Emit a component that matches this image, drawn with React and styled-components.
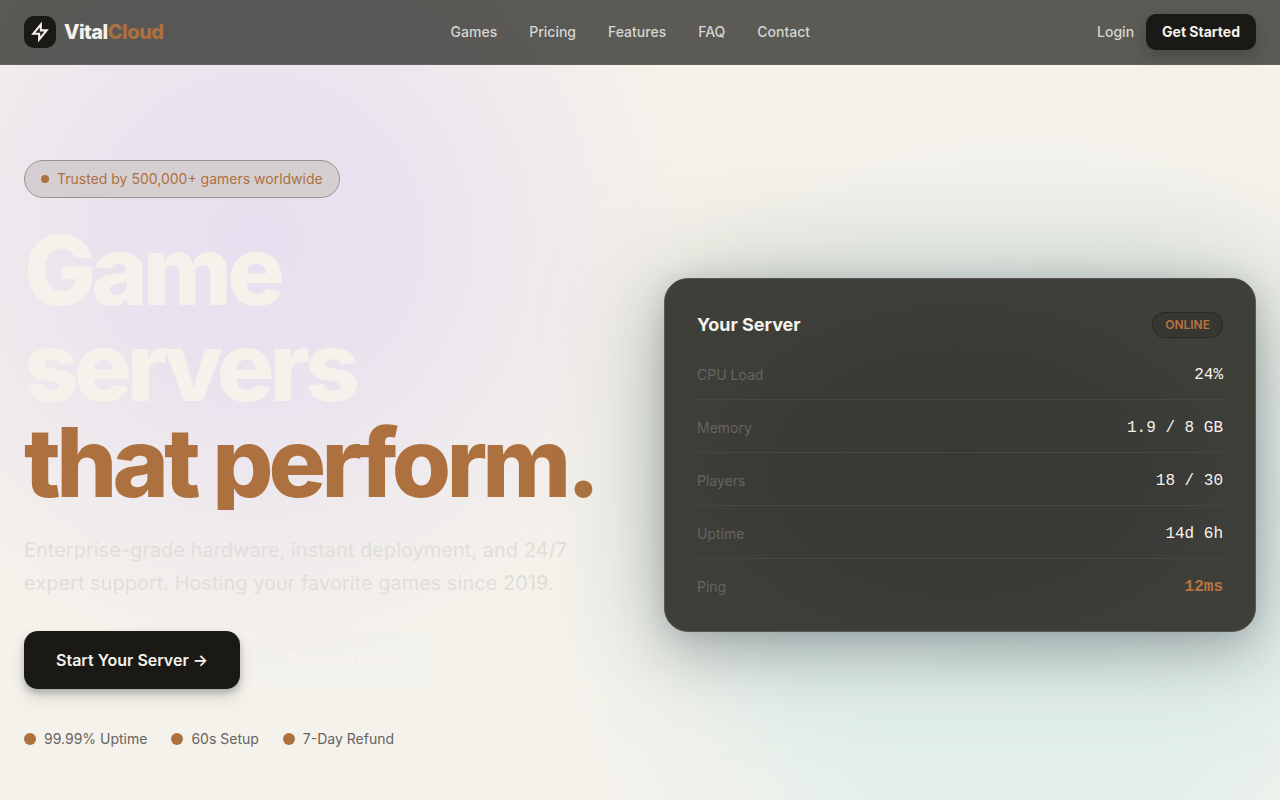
import React from "react";
import styled, { createGlobalStyle } from "styled-components";

const links = ["Games", "Pricing", "Features", "FAQ", "Contact"];

const stats = [
  { label: "CPU Load", value: "24%" },
  { label: "Memory", value: "1.9 / 8 GB" },
  { label: "Players", value: "18 / 30" },
  { label: "Uptime", value: "14d 6h" },
  { label: "Ping", value: "12ms", accent: true },
];

const perks = ["99.99% Uptime", "60s Setup", "7-Day Refund"];

const App = () => {
  return (
    <Page>
      <GlobalStyle />
      <Header>
        <Logo href="#">
          <LogoMark>
            <svg width="20" height="20" viewBox="0 0 24 24" fill="none">
              <path
                d="M13 10V3L4 14h7v7l9-11h-7z"
                stroke="currentColor"
                strokeWidth="2.5"
              />
            </svg>
          </LogoMark>
          <LogoText>
            Vital<Accent>Cloud</Accent>
          </LogoText>
        </Logo>
        <Nav>
          {links.map((item) => (
            <NavLink href="#" key={item}>
              {item}
            </NavLink>
          ))}
        </Nav>
        <Actions>
          <NavLink href="#">Login</NavLink>
          <SmallButton>Get Started</SmallButton>
        </Actions>
      </Header>
      <Hero>
        <Intro>
          <Badge>
            <BadgeDot />
            Trusted by 500,000+ gamers worldwide
          </Badge>
          <Title>
            Game servers
            <TitleAccent>that perform.</TitleAccent>
          </Title>
          <Lead>
            Enterprise-grade hardware, instant deployment, and 24/7 expert
            support. Hosting your favorite games since 2019.
          </Lead>
          <ButtonRow>
            <PrimaryButton>Start Your Server →</PrimaryButton>
            <GhostButton>Browse Games</GhostButton>
          </ButtonRow>
          <Perks>
            {perks.map((item) => (
              <Perk key={item}>
                <PerkDot />
                {item}
              </Perk>
            ))}
          </Perks>
        </Intro>
        <Card>
          <CardHeader>
            <CardTitle>Your Server</CardTitle>
            <Status>ONLINE</Status>
          </CardHeader>
          <Stats>
            <tbody>
              {stats.map((item) => (
                <StatRow key={item.label}>
                  <StatLabel scope="row">{item.label}</StatLabel>
                  <StatValue $accent={item.accent}>{item.value}</StatValue>
                </StatRow>
              ))}
            </tbody>
          </Stats>
        </Card>
      </Hero>
    </Page>
  );
};

export default App;

const GlobalStyle = createGlobalStyle`
  * {
    box-sizing: border-box;
  }

  body {
    margin: 0;
    background-color: #f5f2eb;
    color: #f5f2eb;
    font-family: Inter, "Liberation Sans", sans-serif;
    font-size: 16px;
    line-height: 24px;
  }

  button {
    border: none;
    font-family: inherit;
    cursor: pointer;
  }

  a {
    text-decoration: none;
  }
`;

const Page = styled.div`
  min-height: 100vh;
  display: flex;
  flex-direction: column;
  background-image:
    radial-gradient(circle at 20% 30%, #e7e0f0 0, #e9e2ef 130px, rgba(236, 230, 238, 0.8) 250px, rgba(245, 242, 235, 0) 430px),
    radial-gradient(circle at 80% 74%, #e0eeea 0, rgba(226, 239, 235, 0.95) 240px, rgba(234, 240, 235, 0.6) 350px, rgba(245, 242, 235, 0) 480px);
`;

const Header = styled.header`
  display: flex;
  align-items: center;
  justify-content: space-between;
  padding: 14px 24px;
  background-color: rgba(26, 25, 21, 0.7);
  border-bottom: 1px solid #64625c;
`;

const Logo = styled.a`
  display: flex;
  align-items: center;
  gap: 8px;
  color: #f5f2eb;
`;

const LogoMark = styled.span`
  width: 32px;
  height: 32px;
  display: flex;
  align-items: center;
  justify-content: center;
  border-radius: 10px;
  background-color: #1a1915;
`;

const LogoText = styled.span`
  font-size: 20px;
  font-weight: 800;
  letter-spacing: -0.025em;
`;

const Accent = styled.span`
  color: #ad713f;
`;

const Nav = styled.nav`
  display: flex;
  gap: 32px;
`;

const NavLink = styled.a`
  color: #d6d6d0;
  font-size: 14px;
  font-weight: 500;
  line-height: 20px;
`;

const Actions = styled.div`
  display: flex;
  align-items: center;
  gap: 12px;
`;

const SmallButton = styled.button`
  padding: 8px 16px;
  border-radius: 10px;
  background-color: #1a1915;
  color: #f5f2eb;
  font-size: 14px;
  font-weight: 700;
  line-height: 20px;
  box-shadow: 0 6px 14px rgba(26, 25, 21, 0.25);
`;

const Hero = styled.main`
  flex: 1;
  display: grid;
  grid-template-columns: repeat(2, minmax(0, 1fr));
  gap: 48px;
  align-items: center;
  padding: 48px 24px 4px;
`;

const Intro = styled.section`
  display: flex;
  flex-direction: column;
  align-items: flex-start;
`;

const Badge = styled.div`
  display: flex;
  align-items: center;
  gap: 8px;
  padding: 8px 16px;
  border: 1px solid #979590;
  border-radius: 24px;
  background-color: #d5cfd2;
  color: #ad713f;
  font-size: 14px;
  line-height: 20px;
`;

const BadgeDot = styled.span`
  width: 8px;
  height: 8px;
  border-radius: 50%;
  background-color: #ad713f;
`;

const Title = styled.h1`
  margin: 24px 0;
  font-size: 96px;
  font-weight: 800;
  line-height: 96px;
  letter-spacing: -0.05em;
`;

const TitleAccent = styled.span`
  display: block;
  background-color: #ad713f;
  background-clip: text;
  color: transparent;
`;

const Lead = styled.p`
  max-width: 576px;
  margin: 0 0 32px;
  color: #dfdfd9;
  font-size: 20px;
  line-height: 1.625;
`;

const ButtonRow = styled.div`
  display: flex;
  gap: 16px;
`;

const PrimaryButton = styled.button`
  padding: 17px 32px;
  border-radius: 14px;
  background-color: #1a1915;
  color: #f5f2eb;
  font-size: 16px;
  font-weight: 600;
  line-height: 24px;
  box-shadow:
    0 4px 6px rgba(80, 90, 95, 0.35),
    0 10px 16px rgba(80, 90, 85, 0.15);
`;

const GhostButton = styled(PrimaryButton)`
  background-color: rgba(240, 239, 236, 0.3);
  color: #f7f4ed;
  box-shadow: none;
`;

const Perks = styled.ul`
  display: flex;
  gap: 24px;
  margin: 40px 0 0;
  padding: 0;
  list-style: none;
`;

const Perk = styled.li`
  display: flex;
  align-items: center;
  gap: 8px;
  color: #66645f;
  font-size: 14px;
  line-height: 20px;
`;

const PerkDot = styled.span`
  width: 12px;
  height: 12px;
  border-radius: 50%;
  background-color: #ad713f;
`;

const Card = styled.section`
  padding: 32px;
  border: 1px solid #5a5753;
  border-radius: 24px;
  background-color: #3e3e39;
  background-image: radial-gradient(ellipse at 50% 55%, #393934 0, #3a3a36 45%, #3b3b38 55%, #3f3f3a 72%);
  box-shadow:
    0 20px 50px rgba(60, 70, 75, 0.28),
    0 0 20px rgba(100, 115, 125, 0.15),
    0 0 120px rgba(110, 130, 125, 0.4);
`;

const CardHeader = styled.div`
  display: flex;
  align-items: center;
  justify-content: space-between;
  margin-bottom: 8px;
`;

const CardTitle = styled.h2`
  margin: 0;
  font-size: 18px;
  font-weight: 700;
  line-height: 28px;
`;

const Status = styled.span`
  padding: 4px 12px;
  border: 1px dotted #1a1915;
  border-radius: 14px;
  background-color: #373732;
  color: #b87440;
  font-size: 12px;
  font-weight: 600;
  line-height: 16px;
`;

const Stats = styled.table`
  width: 100%;
  border-spacing: 0;
`;

const StatRow = styled.tr`
  & > * {
    padding: 16px 0 12px;
    border-bottom: 1px solid #474742;
  }

  &:last-child > * {
    padding-bottom: 0;
    border-bottom: none;
  }
`;

const StatLabel = styled.th`
  color: #66645f;
  font-size: 14px;
  font-weight: 400;
  text-align: left;
`;

const StatValue = styled.td`
  color: ${(props) => (props.$accent ? "#b87440" : "#f5f2eb")};
  font-family: "Liberation Mono", monospace;
  font-weight: ${(props) => (props.$accent ? 700 : 400)};
  text-align: right;
`;
